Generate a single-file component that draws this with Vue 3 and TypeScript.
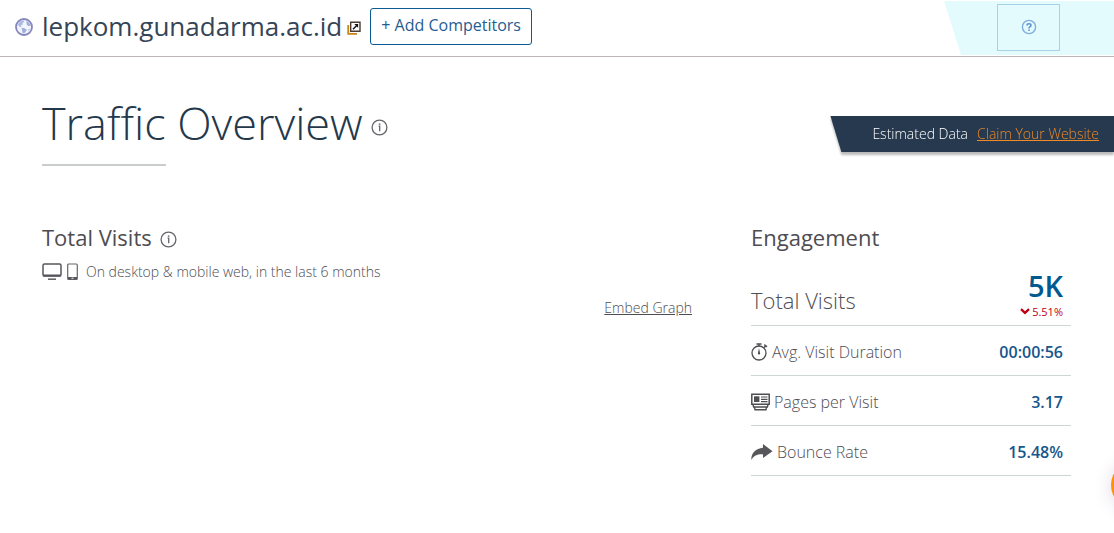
<script setup lang="ts">
interface Metric {
  icon: 'clock' | 'pages' | 'bounce'
  label: string
  value: string
}

const domain = 'lepkom.gunadarma.ac.id'
const metrics: Metric[] = [
  { icon: 'clock', label: 'Avg. Visit Duration', value: '00:00:56' },
  { icon: 'pages', label: 'Pages per Visit', value: '3.17' },
  { icon: 'bounce', label: 'Bounce Rate', value: '15.48%' },
]
</script>

<template>
  <div class="page">
    <header class="topbar">
      <svg class="globe" viewBox="0 0 18 18" width="18" height="18" aria-hidden="true">
        <circle cx="9" cy="9" r="8" fill="#f4f5fc" stroke="#8486bd" stroke-width="1.8" />
        <path d="M3 6.5 4.5 4 6.5 2.8 9.2 2.6 9 4.3 7.5 4.8 7.8 6.4 6 7.3 6.3 9 5 9 3.8 8Z" fill="#a9bce0" />
        <path d="M11 3 14 4.5 15.6 7.5 14 8.3 12 7 11.5 5Z M6.5 9.8 9.5 10.2 12 12 10.5 13.7 9 15.6 7.5 14.8 7.2 12.5Z M13.5 11.3 15 10.8 13.5 13.6Z" fill="#9daed8" />
      </svg>
      <h2 class="domain">{{ domain }}</h2>
      <a class="external" href="#" aria-label="Open website">
        <svg viewBox="0 0 14 14" width="14" height="14" aria-hidden="true">
          <path d="M1.2 4V12.8H10" fill="none" stroke="#c98516" stroke-width="1.8" />
          <path d="M3.7 1.2H13V10.3H3.7Z" fill="#fff" stroke="#4a3c34" stroke-width="1.4" />
          <path d="M6 8.3 10.3 4" stroke="#111" stroke-width="1.4" />
          <path d="M7.3 3H11.1V6.8Z" fill="#111" />
        </svg>
      </a>
      <button class="add" type="button">+ Add Competitors</button>
      <div class="corner">
        <button class="help" type="button" aria-label="Help">
          <svg viewBox="0 0 16 16" width="16" height="16" aria-hidden="true">
            <circle cx="8" cy="8" r="6.6" fill="none" stroke="#7fadde" stroke-width="1.4" />
            <path d="M6 6.4C6 4.2 10 4.2 10 6.4 10 7.8 8 7.6 8 9.4" fill="none" stroke="#6094cc" stroke-width="1.6" />
            <path d="M7.2 10.4H8.8V12H7.2Z" fill="#6094cc" />
          </svg>
        </button>
      </div>
    </header>

    <main>
      <div class="title-row">
        <h1>Traffic Overview</h1>
        <svg class="info title-info" viewBox="0 0 17 17" width="17" height="17" aria-hidden="true">
          <circle cx="8.5" cy="8.5" r="7.4" />
          <path d="M7.6 7.2H8.7V12.2" /><path class="dot" d="M7.8 4.4H9.4V5.8H7.8Z" />
        </svg>
        <div class="claim">
          <div class="ribbon">
            <span>Estimated Data</span>
            <a href="#">Claim Your Website</a>
          </div>
        </div>
      </div>

      <div class="columns">
        <section>
          <h3>
            Total Visits
            <svg class="info" viewBox="0 0 17 17" width="17" height="17" aria-hidden="true">
              <circle cx="8.5" cy="8.5" r="7.4" />
              <path d="M7.6 7.2H8.7V12.2" /><path class="dot" d="M7.8 4.4H9.4V5.8H7.8Z" />
            </svg>
          </h3>
          <p class="scope">
            <svg viewBox="0 0 36 18" width="36" height="18" aria-hidden="true">
              <rect x="1" y="1" width="18" height="12" rx="1.5" fill="none" stroke="#55555c" stroke-width="1.5" />
              <path d="M1 11.5H19V13.5H1Z" fill="#55555c" />
              <path d="M6 15.4H14V17H6Z" fill="#66666c" />
              <rect x="25.7" y="1" width="9.6" height="15.5" rx="1" fill="none" stroke="#66666c" stroke-width="1.2" />
              <path d="M26 14H35V16.5H26Z" fill="#55555c" />
              <path d="M29.5 14.7H31.5V15.7H29.5Z" fill="#fff" />
            </svg>
            <span>On desktop &amp; mobile web, in the last 6 months</span>
          </p>
          <a class="embed" href="#">Embed Graph</a>
        </section>

        <section>
          <h3>Engagement</h3>
          <table>
            <tbody>
              <tr class="total">
                <th scope="row">Total Visits</th>
                <td>
                  <strong>5K</strong>
                  <span class="change">
                    <svg viewBox="0 0 10 7" width="10" height="7" aria-hidden="true">
                      <path d="M1 1.2 5 4.8 9 1.2" fill="none" stroke="#c00014" stroke-width="2.4" />
                    </svg>
                    5.51%
                  </span>
                </td>
              </tr>
              <tr v-for="m in metrics" :key="m.icon">
                <th scope="row">
                  <span class="label">
                    <svg v-if="m.icon === 'clock'" viewBox="0 0 17 18" width="17" height="18" aria-hidden="true">
                      <circle cx="8" cy="10" r="7" fill="none" stroke="#4e4d50" stroke-width="1.3" />
                      <path d="M5.5 1H10.5M8 1V3.5M12.8 4.8 14.8 2.8" stroke="#4e4d50" stroke-width="1.3" />
                      <path d="M13.7 1 16.5 3.2 15.2 4.4 13 2.2Z" fill="#4e4d50" />
                      <path d="M8 5 9.1 10.6 8 12 6.9 10.6Z" fill="#4e4d50" />
                    </svg>
                    <svg v-else-if="m.icon === 'pages'" viewBox="0 0 19 18" width="19" height="18" aria-hidden="true">
                      <path d="M.8 1.3H18.2V11.2H.8Z" fill="#fff" stroke="#4e4d50" stroke-width="1.5" />
                      <path d="M3 3.3H8.4V9H3Z" fill="#4e4d50" />
                      <path d="M10 4H16.5M10 6.3H16.5M10 8.6H16.5" stroke="#4e4d50" stroke-width="1.2" />
                      <path d="M2 11.5 2.6 14H16.4L17 11.5M3.5 14 4 16.8H15L15.5 14" fill="none" stroke="#4e4d50" stroke-width="1.4" />
                    </svg>
                    <svg v-else viewBox="0 0 22 18" width="22" height="18" aria-hidden="true">
                      <path d="M12 1 21.5 8.3 12 15V11.3C6.5 11 3 12.5.3 17 0 10.5 4.5 5.3 12 4.8Z" fill="#57565b" />
                    </svg>
                    {{ m.label }}
                  </span>
                </th>
                <td>{{ m.value }}</td>
              </tr>
            </tbody>
          </table>
        </section>
      </div>
    </main>

    <button class="chat" type="button" aria-label="Open chat"></button>
  </div>
</template>

<style>
body {
  margin: 0;
  background: #fff;
}
</style>

<style scoped>
.page {
  font-family: "Open Sans", sans-serif;
  color: #4e4d52;
}
h1, h2, h3, p {
  margin: 0;
}
svg {
  display: block;
  flex: none;
}
.topbar {
  display: flex;
  align-items: center;
  height: 56px;
  padding-left: 15px;
  border-bottom: 1px solid #bdb5bb;
}
.globe {
  margin: 0 9px 2px 0;
}
.domain {
  font-size: 26px;
  line-height: 52px;
  font-weight: 400;
  color: #354456;
  padding-bottom: 4px;
}
.external {
  margin: 0 9px 0 5px;
}
.add {
  height: 37px;
  padding: 0 10px 2px;
  margin-bottom: 4px;
  border: 1px solid #0a5a93;
  border-radius: 3px;
  background: #fff;
  color: #1f5d92;
  font: 400 16px/33px "Open Sans", sans-serif;
}
.corner {
  display: flex;
  align-items: center;
  justify-content: flex-end;
  box-sizing: border-box;
  width: 170px;
  height: 54px;
  padding-right: 54px;
  margin-left: auto;
  background: #e4fbfe;
  clip-path: polygon(0 0, 100% 0, 100% 100%, 17px 100%);
}
.help {
  display: grid;
  place-items: center;
  width: 63px;
  height: 47px;
  padding: 0;
  margin-bottom: 2px;
  border: 1px solid #a9d2ea;
  background: transparent;
}
main {
  padding: 34px 43px 0 42px;
}
.title-row {
  display: flex;
  align-items: flex-start;
}
h1 {
  font-size: 45px;
  line-height: 64px;
  font-weight: 300;
  color: #24384c;
}
h1::after {
  content: "";
  display: block;
  width: 124px;
  height: 2px;
  margin-top: 9px;
  background: #c9cdc9;
}
.info {
  fill: none;
  stroke: #66666a;
  stroke-width: 1.3;
}
.info .dot {
  fill: #66666a;
  stroke: none;
}
.title-info {
  margin: 28px 0 0 8px;
}
.claim {
  margin: 25px -43px 0 auto;
  filter: drop-shadow(0 3px 1px #bbbbbb);
}
.ribbon {
  display: flex;
  gap: 9px;
  padding: 0 15px 0 42px;
  font-size: 14px;
  line-height: 36px;
  font-weight: 300;
  color: #fff;
  background: #26394f;
  clip-path: polygon(0 0, 100% 0, 100% 100%, 11px 100%);
}
.ribbon a {
  color: #f08a24;
}
.columns {
  display: grid;
  grid-template-columns: minmax(0, 1fr) 320px;
  gap: 59px;
  margin-top: 54px;
}
h3 {
  display: flex;
  align-items: center;
  gap: 8px;
  font-size: 22px;
  line-height: 34px;
  font-weight: 400;
}
h3 .info {
  margin-top: 4px;
}
.scope {
  display: flex;
  align-items: center;
  gap: 8px;
  margin-top: 8px;
  font-size: 14px;
  line-height: 20px;
  font-weight: 300;
}
.embed {
  display: block;
  width: fit-content;
  margin: 16px 0 0 auto;
  font-size: 14px;
  line-height: 20px;
  font-weight: 300;
  color: #4e4d52;
}
table {
  width: 100%;
  margin-top: 14px;
  border-collapse: collapse;
}
th, td {
  height: 47px;
  padding: 2px 0 0;
  border-bottom: 1px solid #ccd6d6;
}
th {
  text-align: left;
  font-size: 16px;
  line-height: 24px;
  font-weight: 300;
}
td {
  padding-right: 8px;
  text-align: right;
  font-size: 16px;
  line-height: 24px;
  font-weight: 600;
  color: #16568c;
}
.label {
  display: flex;
  align-items: center;
  gap: 4px;
}
.total th {
  height: 51px;
  padding-top: 6px;
  font-size: 22px;
  line-height: 30px;
}
.total td {
  height: 51px;
  padding: 0 8px 6px 0;
}
.total strong {
  display: block;
  font-size: 29px;
  line-height: 36px;
  font-weight: 600;
  color: #00598f;
}
.change {
  display: flex;
  align-items: center;
  justify-content: flex-end;
  gap: 2px;
  font-size: 11px;
  line-height: 15px;
  font-weight: 400;
  color: #c00014;
}
.chat {
  position: fixed;
  right: -47px;
  top: 460px;
  width: 50px;
  height: 50px;
  padding: 0;
  border: 0;
  border-radius: 50%;
  background: #fb9208;
  box-shadow: 0 2px 18px 1px #e4dee8;
}
</style>
